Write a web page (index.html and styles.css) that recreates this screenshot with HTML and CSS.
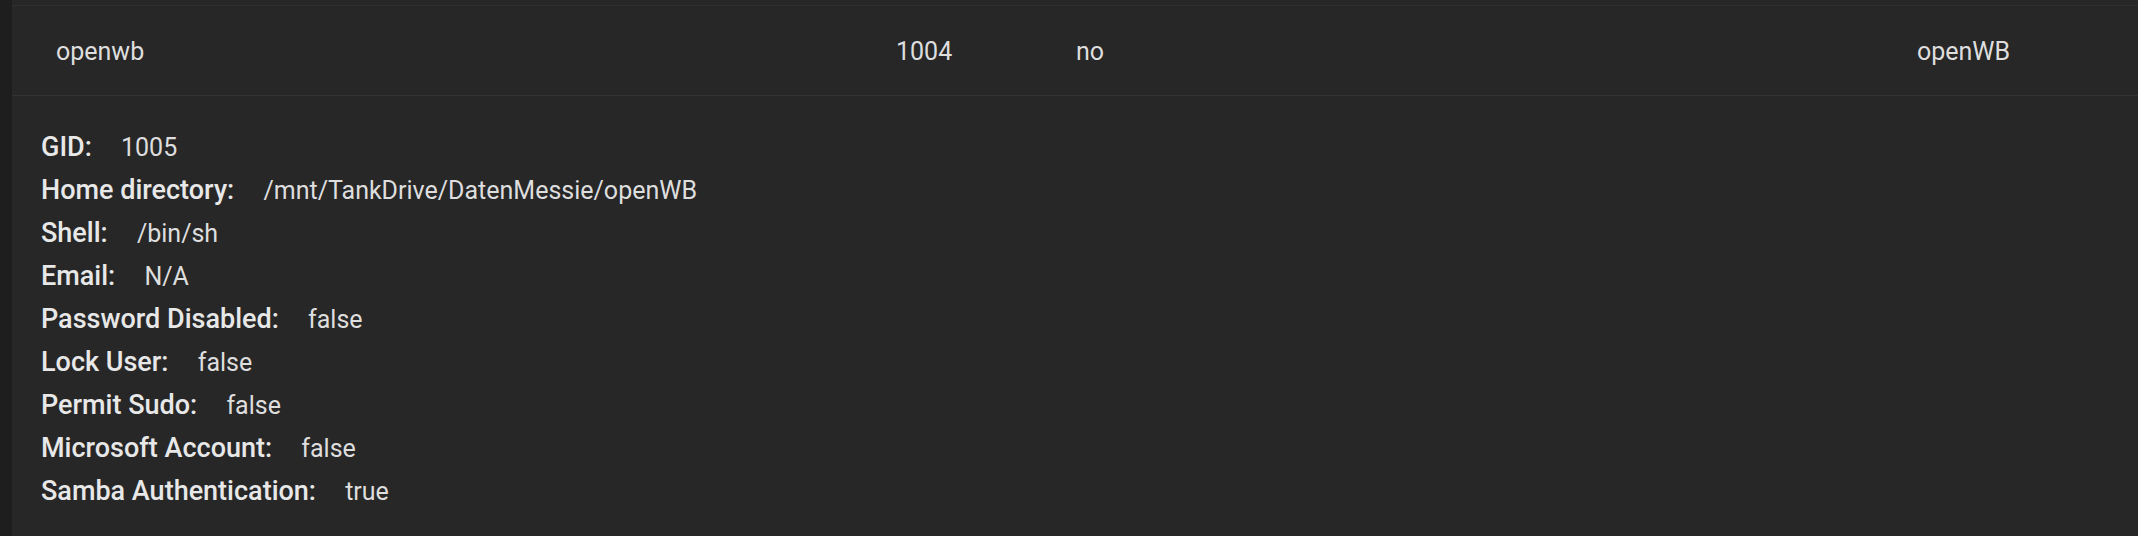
FILE: index.html
```html
<!DOCTYPE html>
<html>
<head>
  <title>Users</title>
  <link rel="stylesheet" href="styles.css">
</head>
<body>
  <div class="panel">
    <div class="user-row">
      <span>openwb</span>
      <span>1004</span>
      <span>no</span>
      <span>openWB</span>
    </div>

    <div class="user-details">
      <p><span class="label">GID:</span> <span>1005</span></p>
      <p><span class="label">Home directory:</span> <span>/mnt/TankDrive/DatenMessie/openWB</span></p>
      <p><span class="label">Shell:</span> <span>/bin/sh</span></p>
      <p><span class="label">Email:</span> <span>N/A</span></p>
      <p><span class="label">Password Disabled:</span> <span>false</span></p>
      <p><span class="label">Lock User:</span> <span>false</span></p>
      <p><span class="label">Permit Sudo:</span> <span>false</span></p>
      <p><span class="label">Microsoft Account:</span> <span>false</span></p>
      <p><span class="label">Samba Authentication:</span> <span>true</span></p>
    </div>
  </div>
</body>
</html>
```

FILE: styles.css
```css
body {
  margin: 0;
  background-color: #1e1e1e;
  font-family: Roboto, "Noto Sans", sans-serif;
  font-size: 25px;
  color: #dedede;
}

.panel {
  margin-left: 12px;
  min-height: 536px;
  background-color: #272727;
  padding-top: 5px;
  box-sizing: border-box;
}

.user-row {
  display: grid;
  grid-template-columns: 840px 180px 841px auto;
  align-items: center;
  height: 91px;
  padding-left: 44px;
  padding-top: 1px;
  box-sizing: border-box;
  border-top: 1px solid #2f2f2f;
  border-bottom: 1px solid #333;
}

.user-details {
  padding: 30px 29px;
}

p {
  margin: 0;
  line-height: 43px;
}

.label {
  font-size: 27px;
  font-weight: 500;
  color: #e8e8e8;
  margin-right: 23px;
}
```
